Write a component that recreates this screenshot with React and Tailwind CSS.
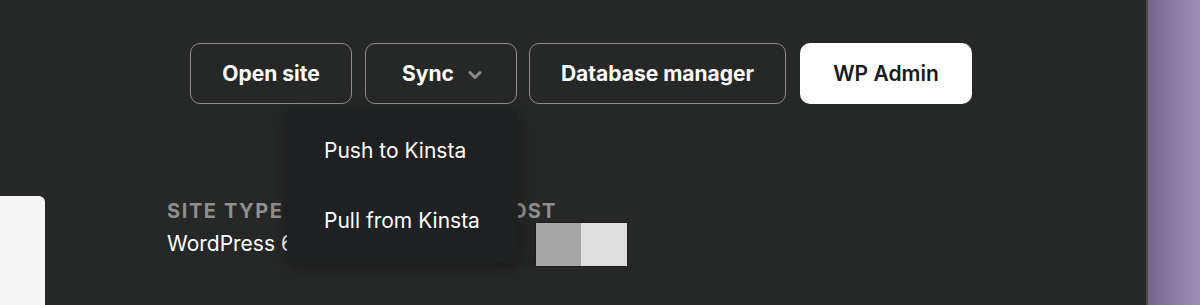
import React from "react";

export default function App() {
  return (
    <div className="flex h-[305px] w-[1200px] overflow-hidden" style={{ fontFamily: "Inter, 'Noto Sans', sans-serif" }}>
      <div className="relative flex-1 bg-[#262727]">
        <div className="flex pt-[43px] pl-[190px]">
          <button className="flex h-[61px] w-[162px] items-center justify-center rounded-[10px] border border-[#8c8c8c] text-[21px] font-bold text-white">
            Open site
          </button>
          <button className="ml-[13px] flex h-[61px] w-[152px] items-center justify-center gap-[14px] rounded-[10px] border border-[#8c8c8c] text-[21px] font-bold text-white">
            <span className="ml-[2px]">Sync</span>
            <svg width="14" height="10" viewBox="0 0 14 10" className="mt-[2px]">
              <path d="M2 2.5 L7 7.5 L12 2.5" fill="none" stroke="#8a8a8a" strokeWidth="3" strokeLinecap="round" strokeLinejoin="round" />
            </svg>
          </button>
          <button className="ml-[12px] flex h-[61px] w-[257px] items-center justify-center rounded-[10px] border border-[#8c8c8c] text-[21px] font-bold text-white">
            Database manager
          </button>
          <button className="ml-[14px] flex h-[61px] w-[172px] items-center justify-center rounded-[10px] bg-white text-[21px] font-semibold text-[#1a1a1a]">
            WP Admin
          </button>
        </div>

        <div className="mt-[92px] flex items-start">
          <div className="h-[120px] w-[45px] rounded-tr-[6px] bg-[#f5f5f5]" />
          <div className="ml-[122px] flex w-[328px] flex-col">
            <div className="mt-[3px] text-[20px] font-bold leading-[24px] tracking-[0.08em] text-[#8f8f8f]">SITE TYPE</div>
            <div className="mt-[8px] text-[21px] leading-[26px] text-white">WordPress 6.4</div>
          </div>
          <div className="flex flex-col">
            <div className="mt-[3px] text-[20px] font-bold leading-[24px] tracking-[0.06em] text-[#8f8f8f]">HOST</div>
            <div className="-mt-[1px] flex h-[45px]">
              <div className="w-[40px] bg-[#232424]" />
              <div className="w-[46px] border border-r-0 border-[#1e1e1e] bg-[#a6a6a6]" />
              <div className="w-[47px] border border-l-0 border-[#1e1e1e] bg-[#dfdfdf]" />
            </div>
          </div>
        </div>

        <div className="absolute left-[287px] top-[110px] flex h-[153px] w-[231px] flex-col rounded-[8px] bg-[#1f2021] pl-[37px] text-[21px] text-white shadow-[0_4px_16px_rgba(0,0,0,0.35)]">
          <div className="mt-[27px] leading-[28px]">Push to Kinsta</div>
          <div className="mt-[42px] leading-[28px]">Pull from Kinsta</div>
        </div>
      </div>
      <div className="w-[2px] bg-[#4d4d4f]" />
      <div className="w-[52px] bg-gradient-to-r from-[#74668a] via-[#8a7ba3] to-[#9d8fb8]" />
    </div>
  );
}
